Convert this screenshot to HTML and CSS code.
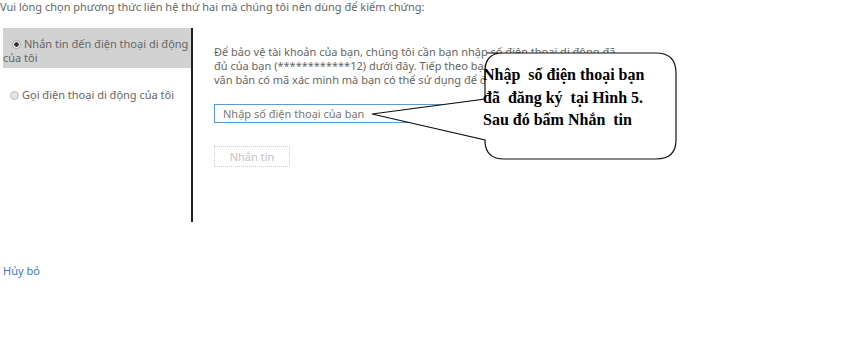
FILE: index.html
```
<!DOCTYPE html>
<html lang="vi">
<head>
    <meta charset="UTF-8">
    <title>Xác minh tài khoản</title>
    <link rel="stylesheet" href="styles.css">
</head>
<body>
    <p class="intro">Vui lòng chọn phương thức liên hệ thứ hai mà chúng tôi nên dùng để kiểm chứng:</p>

    <div class="chooser">
        <ul class="methods">
            <li class="method selected"><span class="radio on"></span>Nhắn tin đến điện thoại di động của tôi</li>
            <li class="method"><span class="radio"></span>Gọi điện thoại di động của tôi</li>
        </ul>
        <div class="detail">
            <p>Để bảo vệ tài khoản của bạn, chúng tôi cần bạn nhập số điện thoại di động đã<br>
               đủ của bạn (************12) dưới đây. Tiếp theo bạn sẽ nhận được tin nhắn<br>
               văn bản có mã xác minh mà bạn có thể sử dụng để đăng nhập.</p>
            <input type="text" class="phone" placeholder="Nhập số điện thoại của bạn">
            <button class="send" disabled>Nhắn tin</button>
        </div>
    </div>

    <a href="#" class="cancel">Hủy bỏ</a>

    <div class="callout">
        <svg width="320" height="120" viewBox="0 0 320 120">
            <path d="M 118 1 L 287 1 Q 307 1 307 21 L 307 88 Q 307 107 287 107 L 135 107 Q 117 107 116 90 L 116 88 L 3 62 L 116 47 L 116 19 Q 116 1 134 1 Z"
                  fill="#fff" stroke="#111" stroke-width="1.2"/>
        </svg>
        <div class="callout-text">Nhập&nbsp; số điện thoại bạn<br>đã&nbsp; đăng ký&nbsp; tại Hình 5.<br>Sau đó bấm Nhắn&nbsp; tin</div>
    </div>
</body>
</html>
```

FILE: styles.css
```
body {
    margin: 0;
    font-family: "Noto Sans", "Open Sans", sans-serif;
    font-size: 11px;
    color: #666;
    background: #fff;
    position: relative;
    width: 848px;
    height: 348px;
}
.intro {
    margin: 0;
    line-height: 13px;
}
.chooser {
    display: flex;
    margin-top: 15px;
    height: 194px;
}
.methods {
    list-style: none;
    margin: 0 0 0 3px;
    padding: 0;
    width: 188px;
    border-right: 2px solid #222;
}
.method {
    line-height: 14px;
    padding: 9px 2px 3px 0;
}
.method + .method {
    margin-top: 11px;
    padding-left: 7px;
}
.selected {
    background-color: #d2d2d2;
}
.selected .radio {
    margin-left: 9px;
}
.radio {
    display: inline-block;
    width: 9px;
    height: 9px;
    border-radius: 50%;
    border: 1px solid #bbb;
    background: #e4e4e4;
    margin-right: 3px;
    vertical-align: -1px;
    box-sizing: border-box;
}
.radio.on {
    background: radial-gradient(circle, #333 0 2px, #f4f4f4 2.5px);
    border-color: #aaa;
}
.detail {
    padding-left: 21px;
    width: 420px;
}
.detail p {
    margin: 17px 0 0;
    line-height: 14px;
    white-space: nowrap;
}
.phone {
    display: block;
    margin-top: 17px;
    width: 400px;
    height: 19px;
    box-sizing: border-box;
    border: 1px solid #5b9bd5;
    padding: 0 8px;
    font: inherit;
    color: #666;
}
.phone::placeholder {
    color: #777;
}
.send {
    display: block;
    margin-top: 23px;
    width: 76px;
    height: 21px;
    font: inherit;
    color: #c4c4c4;
    background: #fff;
    border: 1px dotted #ccc;
}
.cancel {
    display: inline-block;
    margin: 41px 0 0 3px;
    color: #3a78c3;
    text-decoration: none;
}
.callout {
    position: absolute;
    left: 369px;
    top: 52px;
    width: 320px;
    height: 120px;
}
.callout svg {
    display: block;
}
.callout-text {
    position: absolute;
    left: 114px;
    top: 12px;
    font-family: "Liberation Serif", serif;
    font-weight: bold;
    font-size: 16px;
    line-height: 22.5px;
    color: #000;
    white-space: nowrap;
}
```
